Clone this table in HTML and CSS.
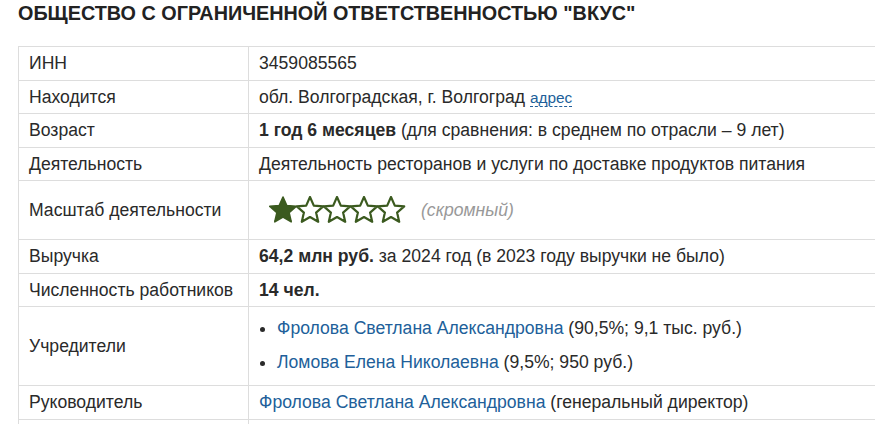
FILE: index.html
```html
<!DOCTYPE html>
<html lang="ru">
<head>
  <meta charset="UTF-8" />
  <meta name="viewport" content="width=device-width, initial-scale=1.0" />
  <title>ООО "ВКУС"</title>
  <link rel="stylesheet" href="styles.css">
</head>
<body>
  <div class="page">
    <h1>ОБЩЕСТВО С ОГРАНИЧЕННОЙ ОТВЕТСТВЕННОСТЬЮ "ВКУС"</h1>

    <table class="info">
      <tr>
        <td class="label">ИНН</td>
        <td>3459085565</td>
      </tr>
      <tr>
        <td class="label">Находится</td>
        <td>обл. Волгоградская, г. Волгоград <a class="dashed" href="#">адрес</a></td>
      </tr>
      <tr>
        <td class="label">Возраст</td>
        <td><strong>1 год 6 месяцев</strong> (для сравнения: в среднем по отрасли – 9 лет)</td>
      </tr>
      <tr>
        <td class="label">Деятельность</td>
        <td>Деятельность ресторанов и услуги по доставке продуктов питания</td>
      </tr>
      <tr>
        <td class="label">Масштаб деятельности</td>
        <td>
          <div class="scale">
            <svg class="stars" width="138" height="28" viewBox="0 0 138 28">
              <defs>
                <polygon id="star" points="14,1 17.8,9.6 27.2,10.4 20.1,16.6 22.2,25.8 14,21 5.8,25.8 7.9,16.6 0.8,10.4 10.2,9.6" />
              </defs>
              <use href="#star" class="full" />
              <use href="#star" class="empty" x="27" />
              <use href="#star" class="empty" x="54" />
              <use href="#star" class="empty" x="81" />
              <use href="#star" class="empty" x="108" />
            </svg>
            <span class="muted">(скромный)</span>
          </div>
        </td>
      </tr>
      <tr>
        <td class="label">Выручка</td>
        <td><strong>64,2 млн руб.</strong> за 2024 год (в 2023 году выручки не было)</td>
      </tr>
      <tr>
        <td class="label">Численность работников</td>
        <td><strong>14 чел.</strong></td>
      </tr>
      <tr>
        <td class="label">Учредители</td>
        <td>
          <ul class="founders">
            <li><a href="#">Фролова Светлана Александровна</a> (90,5%; 9,1 тыс. руб.)</li>
            <li><a href="#">Ломова Елена Николаевна</a> (9,5%; 950 руб.)</li>
          </ul>
        </td>
      </tr>
      <tr>
        <td class="label">Руководитель</td>
        <td><a href="#">Фролова Светлана Александровна</a> (генеральный директор)</td>
      </tr>
      <tr>
        <td class="label">&nbsp;</td>
        <td>&nbsp;</td>
      </tr>
    </table>
  </div>
</body>
</html>
```

FILE: styles.css
```css
html, body { margin: 0; overflow: hidden; }
body { font-family: "Liberation Sans", Arial, sans-serif; font-size: 17.6px; color: #2a2a2a; background: #fff; }
.page { padding: 0 0 0 18px; }
h1 { font-size: 19.8px; line-height: 22px; margin: 2px 0 22px; color: #222; }
.info { width: 900px; border-collapse: collapse; }
.info td { border: 1px solid #ddd; padding: 7px 10px; line-height: 18.5px; vertical-align: middle; }
.info .label { width: 209px; }
a { color: #215f9a; text-decoration: none; }
a.dashed { font-size: 15.4px; line-height: 16px; border-bottom: 1px dashed #215f9a; }
.scale { display: flex; align-items: center; height: 44px; }
.stars { display: block; margin-left: 10px; }
.stars .full { fill: #3b5a1f; stroke: #3b5a1f; stroke-width: 1.6; stroke-linejoin: round; }
.stars .empty { fill: #fff; stroke: #3b5a1f; stroke-width: 2.2; stroke-linejoin: round; }
.muted { color: #999; font-style: italic; margin-left: 14px; }
.founders { margin: 5px 0 7px; padding-left: 18px; }
.founders li + li { margin-top: 15px; }
```
